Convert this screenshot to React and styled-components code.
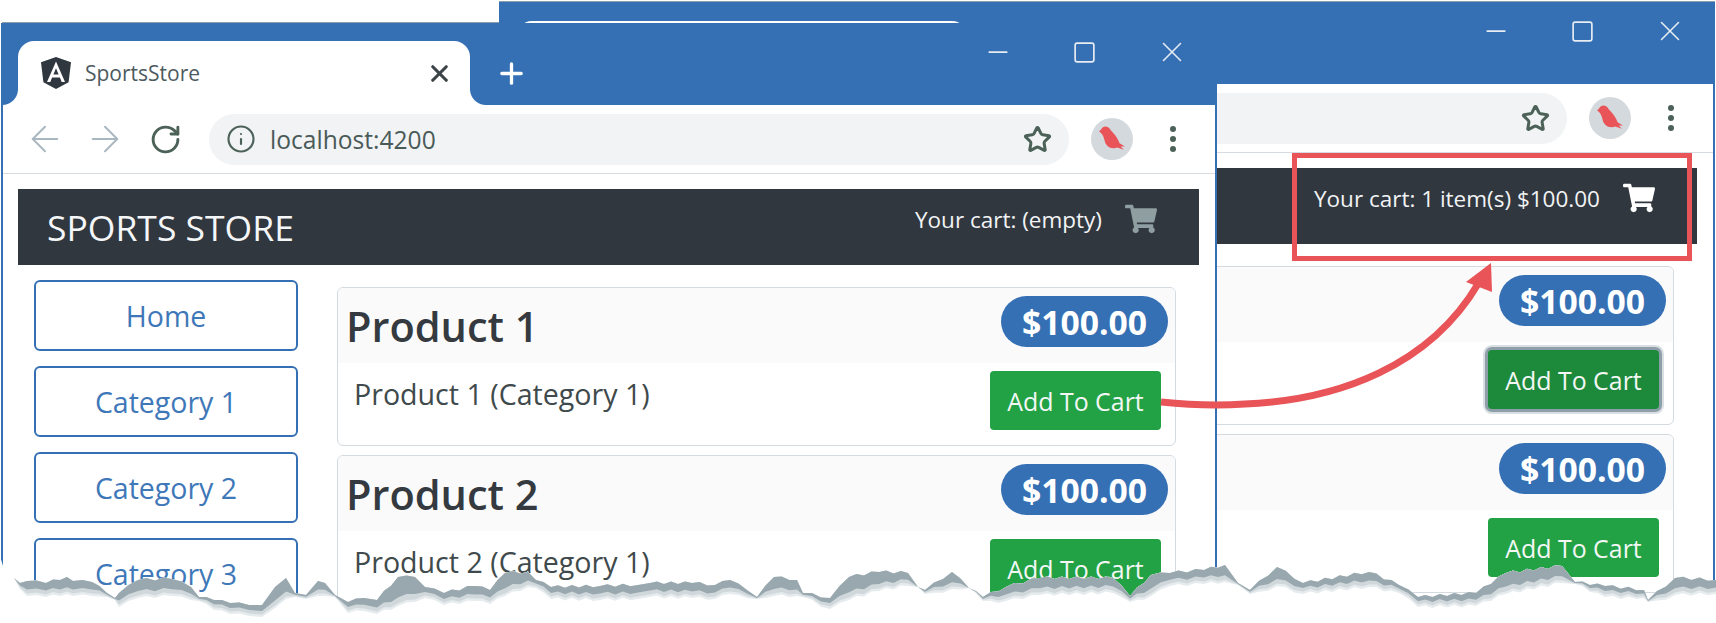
import React from "react";
import styled, { createGlobalStyle } from "styled-components";
import { FaShoppingCart } from "react-icons/fa";
import { ArrowLeft, ArrowRight, Info, Minus, Plus, RotateCw, Square, Star, X } from "lucide-react";

const BLUE = "#3570b5";
const DARK = "#31373f";
const FONT = `"Open Sans", "Noto Sans", sans-serif`;

const GlobalStyle = createGlobalStyle`
  html, body {
    margin: 0;
    background: #fff;
    font-family: ${FONT};
  }
`;

const Stage = styled.div`
  position: relative;
  width: 1716px;
  height: 623px;
  overflow: hidden;
  background: #fff;

  /* top edge of the front window, only seen left of the back window */
  &::before {
    content: "";
    position: absolute;
    left: 2px;
    top: 22px;
    width: 500px;
    height: 1px;
    background: #8f9fa9;
  }
`;

const Frame = styled.section`
  position: absolute;
  left: ${(p) => p.$left}px;
  top: ${(p) => p.$top}px;
  width: 1216px;
  height: 600px;
  box-sizing: border-box;
  border: solid ${BLUE};
  border-width: 0 2px;
  background: #fff;
  box-shadow: ${(p) => (p.$covered ? "0 -1px 0 #8f9fa9" : "none")};
  overflow: hidden;
`;

const TitleBar = styled.div`
  height: 82px;
  box-sizing: border-box;
  display: flex;
  background: ${BLUE};
  padding-left: 15px;
`;

const Tab = styled.div`
  position: relative;
  align-self: flex-end;
  width: 452px;
  height: ${(p) => (p.$covered ? 63 : 64)}px;
  box-sizing: border-box;
  display: flex;
  align-items: center;
  padding: 0 17px 0 23px;
  background: #fff;
  border-radius: 16px 16px 0 0;

  &::before,
  &::after {
    content: "";
    position: absolute;
    bottom: 0;
    width: 16px;
    height: 16px;
  }
  &::before {
    left: -16px;
    background: radial-gradient(circle at 0 0, ${BLUE} 15.5px, #fff 16.5px);
  }
  &::after {
    right: -16px;
    background: radial-gradient(circle at 100% 0, ${BLUE} 15.5px, #fff 16.5px);
  }
`;

const TabTitle = styled.span`
  flex: 1;
  margin-left: 14px;
  font-size: 21px;
  color: #4d5a60;
`;

const NewTab = styled.div`
  align-self: flex-end;
  width: 40px;
  height: 64px;
  margin-left: 21px;
  display: flex;
  align-items: center;
  justify-content: center;
  color: #fff;
`;

const Controls = styled.div`
  margin-left: auto;
  display: flex;
  align-self: flex-start;
`;

const Control = styled.div`
  width: 87px;
  height: 58px;
  display: flex;
  align-items: center;
  justify-content: center;
  color: #e8edf2;
`;

const Toolbar = styled.div`
  height: 69px;
  box-sizing: border-box;
  display: flex;
  align-items: center;
  padding: 0 27px 0 12px;
  border-bottom: 1px solid #d5dbe0;
  background: #fff;
`;

const NavButton = styled.div`
  width: 60px;
  height: 40px;
  display: flex;
  align-items: center;
  justify-content: center;
  color: ${(p) => (p.$muted ? "#a9b7c0" : "#4c6258")};
`;

const Omnibox = styled.div`
  flex: 1;
  height: 51px;
  margin-left: 14px;
  padding: 0 17px;
  display: flex;
  align-items: center;
  border-radius: 26px;
  background: #f1f3f4;
  color: #4c6258;
`;

const Url = styled.span`
  flex: 1;
  margin-left: 14px;
  font-size: 24.6px;
  color: #4a5a58;
`;

const Avatar = styled.div`
  width: 42px;
  height: 42px;
  margin-left: 22px;
  border-radius: 50%;
  background: #d3d9dd;
  display: flex;
  align-items: center;
  justify-content: center;
`;

const Dots = styled.div`
  width: 30px;
  margin-left: 25px;
  display: flex;
  flex-direction: column;
  align-items: center;
  gap: 4px;

  i {
    width: 6px;
    height: 6px;
    border-radius: 50%;
    background: #4c6258;
  }
`;

const Page = styled.div`
  padding: 15px 16px 0 15px;
`;

const Navbar = styled.header`
  height: 76px;
  display: flex;
  justify-content: space-between;
  align-items: center;
  padding: 0 42px 0 29px;
  background: ${DARK};
  color: #fff;
`;

const Brand = styled.div`
  font-size: 35.5px;
  color: #f4f6f8;
`;

const Cart = styled.div`
  align-self: flex-start;
  display: flex;
  align-items: center;
  height: 60px;
  font-size: 22.5px;
  color: #f1f3f5;
`;

const CartIcon = styled(FaShoppingCart)`
  margin-left: 23px;
  font-size: 32px;
  color: ${(p) => (p.$filled ? "#fff" : "#8f9ea0")};
`;

const Body = styled.div`
  display: flex;
  align-items: flex-start;
  padding-left: 16px;
`;

const Sidebar = styled.nav`
  flex: none;
  width: 264px;
  margin-top: 15px;
  display: flex;
  flex-direction: column;
  gap: 15px;
`;

const CategoryButton = styled.div`
  height: 71px;
  box-sizing: border-box;
  display: flex;
  align-items: center;
  justify-content: center;
  border: 2px solid ${BLUE};
  border-radius: 6px;
  font-size: 28.5px;
  color: #3f78b8;
`;

const Products = styled.main`
  width: 839px;
  margin: 22px 0 0 39px;
  display: flex;
  flex-direction: column;
  gap: 9px;
`;

const Card = styled.article`
  height: 159px;
  box-sizing: border-box;
  border: 1px solid #d3dae0;
  border-radius: 6px;
  overflow: hidden;
`;

const CardHeader = styled.div`
  height: 75px;
  box-sizing: border-box;
  display: flex;
  justify-content: space-between;
  align-items: flex-start;
  padding: 8px 7px 0 8px;
  background: #fafafa;
`;

const ProductName = styled.h4`
  margin: 0;
  line-height: 60px;
  font-size: 41.5px;
  font-weight: 600;
  color: #343a40;
`;

const Price = styled.span`
  width: 167px;
  height: 51px;
  display: flex;
  align-items: center;
  justify-content: center;
  border-radius: 26px;
  background: ${BLUE};
  font-size: 33.7px;
  font-weight: 700;
  color: #fff;
`;

const CardBody = styled.div`
  display: flex;
  justify-content: space-between;
  align-items: flex-start;
  padding: 8px 14px 0 16px;
`;

const Description = styled.p`
  margin: 0;
  line-height: 46px;
  font-size: 28.6px;
  color: #3f4a4c;
`;

const AddButton = styled.div`
  width: 171px;
  height: 59px;
  display: flex;
  align-items: center;
  justify-content: center;
  border-radius: 4px;
  background: ${(p) => (p.$pressed ? "#1d8a3b" : "#22a245")};
  box-shadow: ${(p) => (p.$pressed ? "0 0 0 3px #8f9fa9, 0 0 0 5px #d8dee2" : "none")};
  font-size: 24.9px;
  color: #f4f7f5;
`;

const Callout = styled.div`
  position: absolute;
  left: 1292px;
  top: 153px;
  width: 400px;
  height: 108px;
  box-sizing: border-box;
  border: 5px solid #e85458;
`;

const Overlay = styled.svg`
  position: absolute;
  left: 0;
  top: 0;
`;

// x, y of the torn edge, and how thick the shadow under it is
const TEAR = [
  [0, 556, 0], [3, 566, 0], [14, 578, 0], [20, 583, 3], [27, 581, 10], [46, 583, 9], [67, 577, 12], [73, 581, 10], [92, 582, 9],
  [107, 593, 2], [115, 598, 1], [119, 593, 9], [138, 580, 13], [172, 579, 12], [191, 587, 8], [199, 597, 2],
  [214, 600, 5], [230, 603, 6], [249, 605, 6], [262, 605, 7], [275, 587, 16], [286, 578, 16], [295, 593, 2],
  [306, 595, 2], [318, 581, 10], [325, 583, 8], [335, 595, 1], [348, 602, 6], [364, 598, 8], [377, 600, 9],
  [398, 577, 24], [415, 577, 20], [425, 587, 6], [444, 593, 7], [475, 586, 10], [490, 590, 9], [505, 573, 18],
  [528, 572, 10], [536, 580, 4], [551, 587, 7], [600, 586, 9], [638, 585, 9], [650, 583, 9], [692, 583, 10],
  [715, 585, 9], [730, 580, 9], [747, 590, 4], [757, 597, 1], [774, 577, 14], [797, 580, 11], [803, 593, 2],
  [830, 598, 6], [849, 577, 18], [879, 572, 14], [908, 573, 8], [918, 587, 0], [925, 590, 2], [952, 572, 12],
  [969, 588, 0], [983, 597, 2], [1006, 587, 9], [1040, 578, 12], [1113, 578, 10], [1130, 596, 3], [1151, 575, 16],
  [1170, 573, 8], [1204, 570, 9], [1225, 565, 12], [1238, 583, 1], [1250, 590, 2], [1277, 567, 14], [1303, 583, 6],
  [1369, 572, 10], [1399, 585, 4], [1418, 597, 5], [1476, 593, 8], [1506, 573, 16], [1562, 566, 12], [1575, 582, 1],
  [1605, 586, 6], [1644, 590, 4], [1648, 600, 1], [1675, 578, 12], [1716, 580, 9],
];

// adds small teeth between the traced points so the edge looks ripped
const roughTear = () => {
  const points = [];
  TEAR.forEach((point, i) => {
    points.push(point);
    const next = TEAR[i + 1];
    if (next && next[0] - point[0] > 12) {
      const steps = Math.floor((next[0] - point[0]) / 7);
      for (let s = 1; s < steps; s++) {
        const t = s / steps;
        const tooth = s % 2 ? -1.6 : 1.1;
        points.push([
          point[0] + (next[0] - point[0]) * t,
          point[1] + (next[1] - point[1]) * t + tooth,
          point[2] + (next[2] - point[2]) * t,
        ]);
      }
    }
  });
  return points;
};

const tearPoints = roughTear();
const topLine = tearPoints.map(([x, y]) => `${x},${y.toFixed(1)}`);
const bandPath = (scale, extra) =>
  topLine
    .concat(
      tearPoints
        .slice()
        .reverse()
        .map(([x, y, t]) => `${x},${(y + t * scale + extra * Math.min(1, t / 5)).toFixed(1)}`)
    )
    .join(" ");

function TornEdge() {
  return (
    <Overlay width="1716" height="623" viewBox="0 0 1716 623">
      <polygon points={`${topLine.join(" ")} 1716,623 0,623`} fill="#fff" />
      <polygon points={bandPath(1, 5)} fill="#e6ebee" />
      <polygon points={bandPath(1, 2.5)} fill="#d0d8dc" />
      <polygon points={bandPath(0.85, 0)} fill="#98a8ae" />
    </Overlay>
  );
}

function CartArrow() {
  return (
    <Overlay width="1716" height="623" viewBox="0 0 1716 623">
      <path d="M1161 402 C1190 405 1215 406 1245 404 C1340 400 1430 365 1478 284" fill="none" stroke="#e85458" strokeWidth="7" />
      <polygon points="1491,263 1466,282 1492,292" fill="#e85458" />
    </Overlay>
  );
}

function AngularLogo() {
  return (
    <svg width="30" height="32" viewBox="0 0 30 32">
      <path d="M15 0 L30 5.3 L27.6 25.2 L15 32 L2.4 25.2 L0 5.3 Z" fill={DARK} />
      <path d="M15 4.5 L6 25 H9.3 L11.1 20.4 H18.9 L20.7 25 H24 Z M12.4 17.6 L15 11.2 L17.6 17.6 Z" fill="#fff" />
    </svg>
  );
}

function Bird() {
  return (
    <svg width="28" height="28" viewBox="0 0 26 26">
      <path d="M3 4 C5 0 10 1 12 5 C15 8 19 13 20 17 L25 20 L21 20 L24 23 L18 21 C12 23 7 20 6 14 C5 10 4 8 1 6 Z" fill="#e85458" />
    </svg>
  );
}

// covered: the part of the window under the front one carries no text
function BrowserWindow({ left, top, cartText, filled, pressed, covered }) {
  return (
    <Frame $left={left} $top={top} $covered={covered}>
      <TitleBar>
        <Tab $covered={covered}>
          <AngularLogo />
          <TabTitle>{!covered && "SportsStore"}</TabTitle>
          <X size={27} strokeWidth={2.8} color="#3c4447" />
        </Tab>
        <NewTab>
          <Plus size={33} strokeWidth={2.4} />
        </NewTab>
        <Controls>
          <Control><Minus size={30} strokeWidth={1.4} /></Control>
          <Control><Square size={25} strokeWidth={1.6} /></Control>
          <Control><X size={34} strokeWidth={1.1} /></Control>
        </Controls>
      </TitleBar>
      <Toolbar>
        <NavButton $muted><ArrowLeft size={42} strokeWidth={1.1} /></NavButton>
        <NavButton $muted><ArrowRight size={42} strokeWidth={1.1} /></NavButton>
        <NavButton><RotateCw size={33} strokeWidth={2.1} /></NavButton>
        <Omnibox>
          <Info size={30} strokeWidth={1.7} />
          <Url>{!covered && "localhost:4200"}</Url>
          <Star size={29} strokeWidth={2.5} />
        </Omnibox>
        <Avatar><Bird /></Avatar>
        <Dots><i /><i /><i /></Dots>
      </Toolbar>
      <Page>
        <Navbar>
          <Brand>{!covered && "SPORTS STORE"}</Brand>
          <Cart>
            {cartText}
            <CartIcon $filled={filled} />
          </Cart>
        </Navbar>
        <Body>
          <Sidebar>
            {["Home", "Category 1", "Category 2", "Category 3"].map((name) => (
              <CategoryButton key={name}>{!covered && name}</CategoryButton>
            ))}
          </Sidebar>
          <Products>
            {[1, 2].map((n) => (
              <Card key={n}>
                <CardHeader>
                  <ProductName>{!covered && `Product ${n}`}</ProductName>
                  <Price>$100.00</Price>
                </CardHeader>
                <CardBody>
                  <Description>{!covered && `Product ${n} (Category 1)`}</Description>
                  <AddButton $pressed={pressed && n === 1}>Add To Cart</AddButton>
                </CardBody>
              </Card>
            ))}
          </Products>
        </Body>
      </Page>
    </Frame>
  );
}

export default function App() {
  return (
    <Stage>
      <GlobalStyle />
      <BrowserWindow left={499} top={2} cartText="Your cart: 1 item(s) $100.00" filled pressed covered />
      <BrowserWindow left={1} top={23} cartText="Your cart: (empty)" />
      <Callout />
      <CartArrow />
      <TornEdge />
    </Stage>
  );
}
